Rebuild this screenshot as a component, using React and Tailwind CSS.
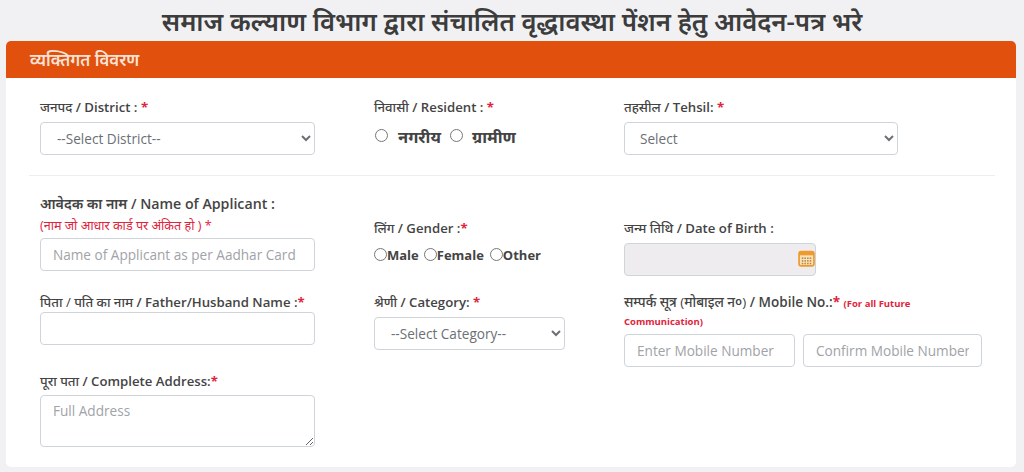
import React from 'react';

const inputClass = "block h-[33px] rounded border border-[#ced4da] bg-white text-[13.6px] text-[#495057] placeholder:text-[#a0a3a7] outline-none";
const selectClass = "block h-[33px] rounded border border-[#ced4da] bg-white pr-[4px] text-[13.6px] text-[#6c7075] outline-none";
const labelClass = "block text-[13.2px] leading-[16px] font-semibold text-[#444444]";

const Star = ({ children = '*' }) => <span className="font-bold text-[#e0243c]">{children}</span>;

// the hindi part of a label is lighter than the english part
const Hi = ({ children }) => <span className="font-medium">{children}</span>;

const CalendarIcon = () => (
    <svg width="17" height="17" viewBox="0 0 16 16" className="absolute right-[1px] top-[7px]">
        <rect x="1" y="1.5" width="14" height="13.5" rx="2" fill="#fbe3bd" stroke="#ee9a2e" strokeWidth="1.6" />
        <rect x="1" y="1.5" width="14" height="3.5" fill="#ee9a2e" />
        {[7, 9.5, 12].map((y) => [3.5, 6, 8.5, 11].map((x) => (
            <rect key={`${x}-${y}`} x={x} y={y} width="1.5" height="1.5" fill="#b9883f" />
        )))}
    </svg>
);

const Radio = ({ name, label, className }) => (
    <label className={`flex items-center ${className}`}>
        <input type="radio" name={name} className="m-0 size-[13px] -translate-y-[1px]" />
        {label}
    </label>
);

const App = () => {
    return (
        <div className="h-[472px] overflow-hidden bg-[#f1f1f4] font-['Open_Sans','Noto_Sans','Noto_Sans_Devanagari',sans-serif]">
            <h1 className="h-[41px] text-center text-[25.7px] leading-[43px] font-semibold text-[#3c3c3c]">
                समाज कल्याण विभाग द्वारा संचालित वृद्धावस्था पेंशन हेतु आवेदन-पत्र भरे
            </h1>
            <div className="mx-[6px] h-[426px] w-[1010px] overflow-hidden rounded-[5px] bg-white">
                <div className="h-[37px] bg-[#e2500d] pl-[24px] text-[16.8px] leading-[37px] font-semibold text-[#f8e3d6]">
                    व्यक्तिगत विवरण
                </div>

                <div className="flex h-[97px] pt-[21px] pl-[34px]">
                    <div className="w-[334px]">
                        <label className={labelClass}><Hi>जनपद</Hi> / District : <Star /></label>
                        <select className={`${selectClass} mt-[7px] w-[275px] pl-[12px]`}>
                            <option>--Select District--</option>
                        </select>
                    </div>
                    <div className="w-[250px]">
                        <label className={labelClass}><Hi>निवासी</Hi> / Resident : <Star /></label>
                        <div className="mt-[10px] ml-[1px] flex items-center text-[16.5px] leading-[22px] font-bold text-[#444444]">
                            <Radio name="resident" label={<span className="ml-[10px] mr-[9px] translate-y-[1px]">नगरीय</span>} />
                            <Radio name="resident" label={<span className="ml-[9px] translate-y-[1px]">ग्रामीण</span>} />
                        </div>
                    </div>
                    <div>
                        <label className={labelClass}><Hi>तहसील</Hi> / Tehsil: <Star /></label>
                        <select className={`${selectClass} mt-[7px] w-[274px] pl-[11px]`}>
                            <option>Select</option>
                        </select>
                    </div>
                </div>

                <div className="ml-[23px] mr-[21px] border-t border-[#eceef0]"></div>

                <div className="flex h-[197px] pl-[34px]">
                    <div className="w-[334px]">
                        <label className="mt-[19px] block text-[14.2px] leading-[18px] font-semibold text-[#444444]">आवेदक का नाम / Name of Applicant :</label>
                        <div className="mt-[6px] text-[12.6px] leading-[14px] text-[#e0243c]">(नाम जो आधार कार्ड पर अंकित हो ) *</div>
                        <input className={`${inputClass} mt-[5px] w-[275px] px-[12px]`} placeholder="Name of Applicant as per Aadhar Card" />
                        <label className={`${labelClass} mt-[23px]`}><Hi>पिता / पति का नाम</Hi> / Father/Husband Name :<Star /></label>
                        <input className={`${inputClass} mt-[2px] w-[275px] px-[12px]`} />
                    </div>
                    <div className="w-[250px]">
                        <label className={`${labelClass} mt-[44px]`}><Hi>लिंग</Hi> / Gender :<Star /></label>
                        <div className="mt-[11px] flex items-center text-[13px] leading-[16px] font-bold text-[#444444]">
                            <Radio name="gender" label="Male" className="mr-[5px]" />
                            <Radio name="gender" label="Female" className="mr-[6px]" />
                            <Radio name="gender" label="Other" />
                        </div>
                        <label className={`${labelClass} mt-[31px]`}><Hi>श्रेणी</Hi> / Category: <Star /></label>
                        <select className={`${selectClass} mt-[7px] w-[191px] pl-[12px]`}>
                            <option>--Select Category--</option>
                        </select>
                    </div>
                    <div>
                        <label className={`${labelClass} mt-[44px]`}><Hi>जन्म तिथि</Hi> / Date of Birth :</label>
                        <div className="relative mt-[7px] w-[192px]">
                            <input disabled className={`${inputClass} w-[192px] !bg-[#eeecee]`} />
                            <CalendarIcon />
                        </div>
                        <label className={`${labelClass} mt-[17px] w-[320px] !text-[13.5px] !leading-[18px]`}>
                            <Hi>सम्पर्क सूत्र (मोबाइल न०)</Hi> / Mobile No.:<Star /> <span className="text-[9.5px] leading-[12px] font-bold text-[#e0243c]">(For all Future Communication)</span>
                        </label>
                        <div className="mt-[5px] flex gap-[8px]">
                            <input className={`${inputClass} w-[171px] px-[12px]`} placeholder="Enter Mobile Number" />
                            <input className={`${inputClass} w-[179px] px-[12px]`} placeholder="Confirm Mobile Number" />
                        </div>
                    </div>
                </div>

                <div className="pl-[34px]">
                    <label className={labelClass}><Hi>पूरा पता</Hi> / Complete Address:<Star /></label>
                    <textarea rows="2" className={`${inputClass} mt-[6px] !h-[52px] w-[275px] px-[12px] py-[5px]`} placeholder="Full Address"></textarea>
                </div>
            </div>
        </div>
    );
};

export default App;
